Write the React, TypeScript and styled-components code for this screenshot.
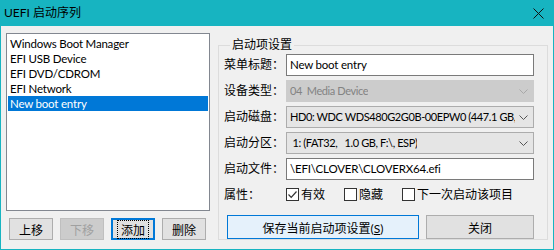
import React, { useState } from 'react';
import styled, { createGlobalStyle } from 'styled-components';

const GlobalStyle = createGlobalStyle`
  html, body {
    margin: 0;
    padding: 0;
    width: 554px;
    height: 250px;
    overflow: hidden;
    background: #f0f0f0;
  }
  * {
    box-sizing: border-box;
  }
`;

const FONT = `Lato, "Noto Sans CJK SC", sans-serif`;

const Window = styled.div`
  width: 554px;
  height: 250px;
  border: 1px solid #17b4c1;
  border-top: none;
  background: #f0f0f0;
  font-family: ${FONT};
  font-size: 12px;
  line-height: 16px;
  color: #000;
  display: flex;
  flex-direction: column;
`;

const TitleBar = styled.div`
  height: 26px;
  background: #17b4c1;
  display: flex;
  align-items: center;
  justify-content: space-between;
  padding: 0 10px 0 4px;
  margin: 0 -1px;
  font-size: 12px;
`;

const CloseIcon = styled.svg`
  width: 11px;
  height: 11px;
`;

const Body = styled.div`
  flex: 1;
  display: flex;
  gap: 8px;
  padding: 7px 6px 0 5px;
`;

const LeftColumn = styled.div`
  display: flex;
  flex-direction: column;
  gap: 7px;
`;

const ListBox = styled.div`
  width: 204px;
  height: 178px;
  background: #fff;
  border: 1px solid #828790;
  padding: 2px 1px;
  font-size: 11.5px;
  letter-spacing: -0.2px;
`;

const ListItem = styled.div<{ $selected?: boolean }>`
  height: 15px;
  line-height: 15px;
  padding-left: 2px;
  white-space: nowrap;
  overflow: hidden;
  background: ${(p) => (p.$selected ? '#0078d7' : 'transparent')};
  color: ${(p) => (p.$selected ? '#fff' : '#000')};
`;

const ButtonRow = styled.div`
  display: flex;
  gap: 7px;
  padding-left: 3px;
`;

const Button = styled.button<{ $focused?: boolean; $w?: number; $h?: number }>`
  width: ${(p) => p.$w ?? 44}px;
  height: ${(p) => p.$h ?? 22}px;
  font-family: ${FONT};
  font-size: 12px;
  padding: 0;
  color: #000;
  background: #e1e1e1;
  border: 1px solid #adadad;
  outline: none;
  display: flex;
  align-items: center;
  justify-content: center;
  ${(p) =>
    p.$focused &&
    `
    border: 2px solid #0078d7;
    & > span { outline: 1px dotted #000; outline-offset: 0px; padding: 0 3px; }
  `}
  &:disabled {
    background: #cccccc;
    border-color: #bfbfbf;
    color: #a0a0a0;
  }
`;

const DefaultButton = styled(Button)`
  background: #e5f1fb;
  border: 1px solid #0078d7;
`;

const Group = styled.fieldset`
  margin: 5px 0 0 0;
  width: 331px;
  height: 202px;
  border: 1px solid #dcdcdc;
  padding: 2px 13px 0 5px;
  display: flex;
  flex-direction: column;
  gap: 4px;
`;

const Legend = styled.legend`
  padding: 0 2px;
  margin-left: 6px;
  font-size: 12px;
  line-height: 14px;
`;

const FieldRow = styled.div`
  display: grid;
  grid-template-columns: 62px 248px;
  align-items: center;
  height: 22px;
`;

const Label = styled.span<{ $w?: number }>`
  white-space: nowrap;
  ${(p) => (p.$w ? `width: ${p.$w}px;` : '')}
`;

const TextInput = styled.div`
  height: 22px;
  border: 1px solid #7a7a7a;
  background: #fff;
  padding: 0 3px;
  line-height: 20px;
  font-size: 11.5px;
  letter-spacing: -0.2px;
  white-space: nowrap;
  overflow: hidden;
`;

const Combo = styled.div<{ $disabled?: boolean }>`
  height: 22px;
  border: 1px solid ${(p) => (p.$disabled ? '#cccccc' : '#acacac')};
  background: ${(p) => (p.$disabled ? '#cccccc' : '#e5e5e5')};
  color: ${(p) => (p.$disabled ? '#838383' : '#000')};
  font-size: 11px;
  letter-spacing: -0.4px;
  display: flex;
  align-items: center;
  justify-content: space-between;
  gap: 4px;
  padding: 0 5px 0 3px;
  white-space: nowrap;
  overflow: hidden;
`;

const ComboText = styled.span`
  overflow: hidden;
`;

const Chevron = ({ color }: { color: string }) => (
  <svg width="9" height="5" viewBox="0 0 9 5" style={{ flexShrink: 0 }}>
    <path d="M0.5 0.5 L4.5 4.5 L8.5 0.5" fill="none" stroke={color} strokeWidth="1" />
  </svg>
);

const CheckRow = styled.div`
  display: flex;
  align-items: center;
  height: 20px;
  margin-top: 2px;
`;

const CheckGroup = styled.div`
  display: flex;
  align-items: center;
  gap: 19px;
`;

const CheckLabel = styled.label`
  display: flex;
  align-items: center;
  gap: 2px;
`;

const Box = styled.span`
  width: 13px;
  height: 13px;
  border: 1px solid #333;
  background: #fff;
  display: inline-flex;
  align-items: center;
  justify-content: center;
`;

const ActionRow = styled.div`
  display: flex;
  gap: 7px;
  margin-top: 8px;
  padding-left: 3px;
`;

const Check = ({ checked, label }: { checked?: boolean; label: string }) => (
  <CheckLabel>
    <Box>
      {checked && (
        <svg width="11" height="11" viewBox="0 0 11 11">
          <path d="M1.5 5.5 L4.2 8.3 L9.5 2.5" fill="none" stroke="#333" strokeWidth="1.2" />
        </svg>
      )}
    </Box>
    {label}
  </CheckLabel>
);

const entries = ['Windows Boot Manager', 'EFI USB Device', 'EFI DVD/CDROM', 'EFI Network', 'New boot entry'];

export default function App() {
  const [selected, setSelected] = useState(4);

  return (
    <>
      <GlobalStyle />
      <Window>
        <TitleBar>
          <span>UEFI 启动序列</span>
          <CloseIcon viewBox="0 0 11 11">
            <path d="M0.5 0.5 L10.5 10.5 M10.5 0.5 L0.5 10.5" stroke="#111" strokeWidth="1" />
          </CloseIcon>
        </TitleBar>
        <Body>
          <LeftColumn>
            <ListBox>
              {entries.map((e, i) => (
                <ListItem key={e} $selected={i === selected} onClick={() => setSelected(i)}>
                  {e}
                </ListItem>
              ))}
            </ListBox>
            <ButtonRow>
              <Button>上移</Button>
              <Button disabled>下移</Button>
              <Button $focused>
                <span>添加</span>
              </Button>
              <Button>删除</Button>
            </ButtonRow>
          </LeftColumn>
          <Group>
            <Legend>启动项设置</Legend>
            <FieldRow>
              <Label>菜单标题：</Label>
              <TextInput>New boot entry</TextInput>
            </FieldRow>
            <FieldRow>
              <Label>设备类型：</Label>
              <Combo $disabled>
                <ComboText>04&nbsp; Media Device</ComboText>
                <Chevron color="#a8a8a8" />
              </Combo>
            </FieldRow>
            <FieldRow>
              <Label>启动磁盘：</Label>
              <Combo>
                <ComboText>HD0: WDC WDS480G2G0B-00EPW0 (447.1 GB,</ComboText>
                <Chevron color="#555" />
              </Combo>
            </FieldRow>
            <FieldRow>
              <Label>启动分区：</Label>
              <Combo>
                <ComboText>&nbsp;1: (FAT32,&nbsp;&nbsp; 1.0 GB, F:\, ESP)</ComboText>
                <Chevron color="#555" />
              </Combo>
            </FieldRow>
            <FieldRow>
              <Label>启动文件：</Label>
              <TextInput>\EFI\CLOVER\CLOVERX64.efi</TextInput>
            </FieldRow>
            <CheckRow>
              <Label $w={62}>属性：</Label>
              <CheckGroup>
                <Check checked label="有效" />
                <Check label="隐藏" />
                <Check label="下一次启动该项目" />
              </CheckGroup>
            </CheckRow>
            <ActionRow>
              <DefaultButton $w={192} $h={24}>
                <span>
                  保存当前启动项设置(<u>S</u>)
                </span>
              </DefaultButton>
              <Button $w={108} $h={24}>
                关闭
              </Button>
            </ActionRow>
          </Group>
        </Body>
      </Window>
    </>
  );
}
